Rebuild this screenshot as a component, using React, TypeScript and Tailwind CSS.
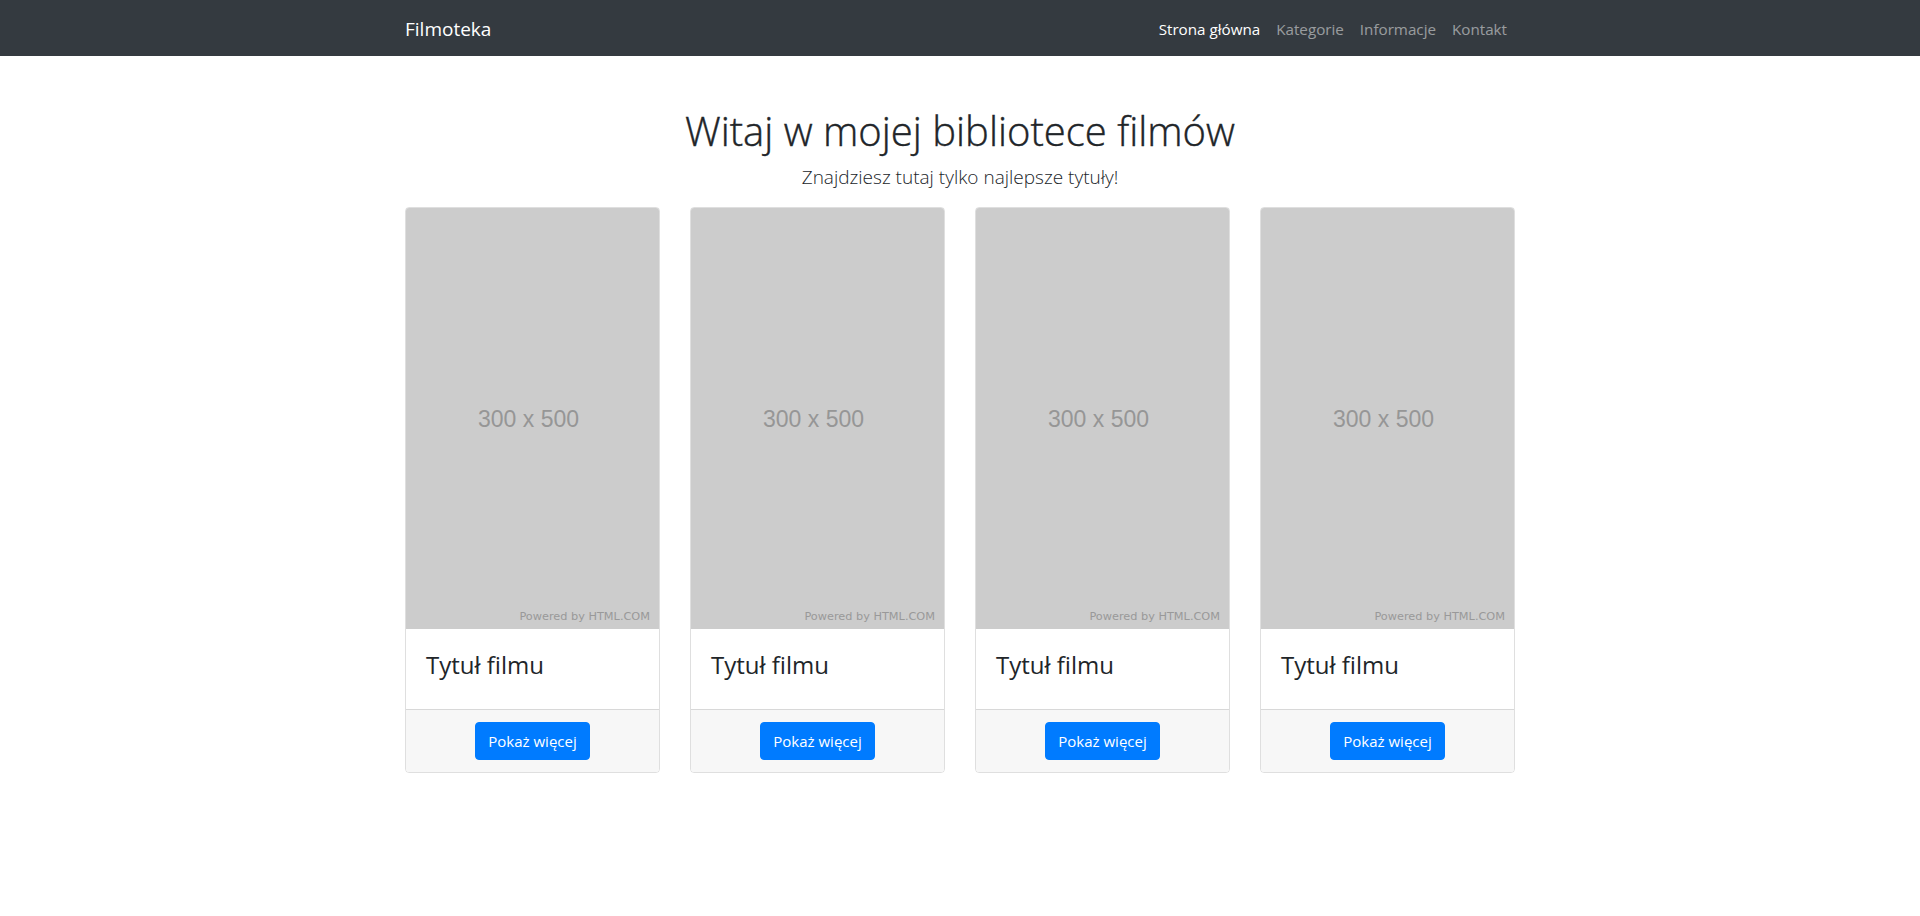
import React from 'react';

const links = [
  { label: 'Strona główna', active: true },
  { label: 'Kategorie', active: false },
  { label: 'Informacje', active: false },
  { label: 'Kontakt', active: false },
];

const movies = [1, 2, 3, 4];

const Placeholder: React.FC = () => (
  <div className="relative h-[421px] bg-[#cccccc] rounded-t-[3px] flex items-center justify-center">
    <span className="mr-[8px] mt-[2px] text-[23px] text-[#969696] font-['Liberation_Sans',Arial,sans-serif]">300 x 500</span>
    <span className="absolute right-[9px] bottom-[3px] text-[11.3px] text-[#999999] font-['DejaVu_Sans',Verdana,sans-serif]">
      Powered by HTML.COM
    </span>
  </div>
);

const App: React.FC = () => {
  return (
    <div className="min-h-[916px] bg-white text-[#212529] font-['Open_Sans',sans-serif]">
      {/* Navbar */}
      <nav className="bg-[#343a40] h-[56px]">
        <div className="w-[1140px] mx-auto px-[15px] pt-[2px] h-full flex items-center justify-between">
          <a href="#" className="text-[19px] text-white leading-[30px]">Filmoteka</a>
          <ul className="flex items-center">
            {links.map((l) => (
              <li key={l.label}>
                <a
                  href="#"
                  className={`block px-[8px] py-[8px] text-[15.2px] leading-[24px] ${
                    l.active ? 'text-white' : 'text-white/50'
                  }`}
                >
                  {l.label}
                </a>
              </li>
            ))}
          </ul>
        </div>
      </nav>

      {/* Header */}
      <main className="w-[1140px] mx-auto px-[15px]">
        <div className="text-center pt-[51px]">
          <h1 className="text-[40px] font-light leading-[48px] [-webkit-text-stroke:0.4px_#212529]">
            Witaj w mojej bibliotece filmów
          </h1>
          <p className="mt-[7px] text-[19px] font-light leading-[30px]">Znajdziesz tutaj tylko najlepsze tytuły!</p>
        </div>

        {/* Cards */}
        <div className="mt-[15px] grid grid-cols-4 gap-[30px]">
          {movies.map((m) => (
            <div key={m} className="border border-black/[0.125] rounded-[4px] flex flex-col">
              <Placeholder />
              <div className="p-[20px]">
                <h4 className="pt-[2px] text-[24px] leading-[28px] mb-[10px]">Tytuł filmu</h4>
              </div>
              <div className="bg-[#f7f7f7] border-t border-black/[0.125] py-[12px] px-[20px] flex justify-center rounded-b-[3px]">
                <button className="bg-[#007bff] text-white text-[15px] leading-[24px] px-[12px] py-[6px] rounded-[4px] border border-[#007bff]">
                  Pokaż więcej
                </button>
              </div>
            </div>
          ))}
        </div>
      </main>
    </div>
  );
};

export default App;
